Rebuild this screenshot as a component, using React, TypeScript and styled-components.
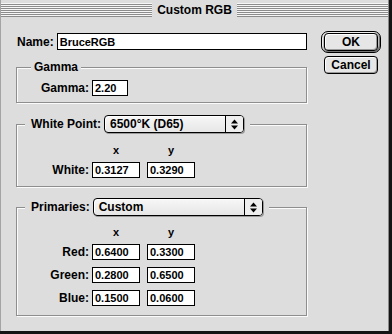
import React, { FC } from 'react';
import styled, { createGlobalStyle } from 'styled-components';

const GlobalStyle = createGlobalStyle`
  html, body {
    margin: 0;
    padding: 0;
    background: #141414;
  }
  body {
    font-family: 'Liberation Sans', Arial, sans-serif;
    color: #000;
  }
`;

const Window = styled.div`
  width: 389px;
  height: 331px;
  box-sizing: border-box;
  background: #dddddd;
  border-left: 1px solid #a4a4a4;
  border-right: 1px solid #8a8a8a;
  display: flex;
  flex-direction: column;
`;

const TitleBar = styled.div`
  height: 19px;
  display: flex;
  align-items: center;
`;

const Stripes = styled.div`
  flex: 1;
  height: 14px;
  background: repeating-linear-gradient(
    to bottom,
    #f6f6f6 0px,
    #f6f6f6 1px,
    #8c8c8c 1px,
    #8c8c8c 2px
  );
`;

const Title = styled.div`
  padding: 0 5px;
  font-size: 12px;
  font-weight: bold;
  line-height: 14px;
`;

const Body = styled.div`
  display: flex;
  align-items: flex-start;
  padding: 12px 0 0 15px;
`;

const LeftCol = styled.div`
  width: 291px;
  display: flex;
  flex-direction: column;
`;

const RightCol = styled.div`
  width: 60px;
  margin-left: 14px;
  display: flex;
  flex-direction: column;
  align-items: center;
`;

const NameRow = styled.div`
  margin-top: 2px;
  height: 17px;
  display: flex;
  align-items: center;
`;

const Label = styled.span`
  font-size: 12px;
  font-weight: bold;
  line-height: 14px;
  white-space: nowrap;
`;

const NameLabel = styled(Label)`
  padding-left: 1px;
  margin-right: 3px;
`;

const Field = styled.input<{ $w: number; $h?: number }>`
  width: ${(p) => p.$w}px;
  height: ${(p) => p.$h ?? 16}px;
  box-sizing: border-box;
  margin: 0;
  padding: 0 2px;
  border: 1px solid #000;
  background: #fff;
  font-family: 'Liberation Sans', Arial, sans-serif;
  font-size: 11px;
  font-weight: bold;
  color: #000;
  outline: none;
`;

const Group = styled.fieldset<{ $mt: number; $pt: number; $pb: number }>`
  margin: ${(p) => p.$mt}px 0 0;
  padding: ${(p) => p.$pt}px 0 ${(p) => p.$pb}px;
  min-inline-size: 0;
  border: 1px solid #8e8e8e;
  box-shadow: inset 1px 1px 0 #fbfbfb, 1px 1px 0 #fbfbfb;
`;

const Legend = styled.legend<{ $ml: number; $px: number }>`
  margin-left: ${(p) => p.$ml}px;
  padding: 0 ${(p) => p.$px}px;
  background: #dddddd;
`;

const LegendInner = styled.span`
  display: flex;
  align-items: center;
  height: 18px;
`;

const LegendText = styled(Label)`
  display: block;
`;

const Popup = styled.div<{ $w: number }>`
  width: ${(p) => p.$w}px;
  height: 18px;
  box-sizing: border-box;
  margin-left: 3px;
  display: flex;
  border: 1px solid #000;
  border-radius: 4px;
  background: linear-gradient(#f7f7f7, #e6e6e6);
  box-shadow: inset 1px 1px 0 #fff, 1px 1px 0 #9a9a9a;
  overflow: hidden;
`;

const PopupText = styled.span`
  flex: 1;
  padding-left: 5px;
  font-size: 12px;
  font-weight: bold;
  line-height: 16px;
`;

const PopupArrows = styled.span`
  width: 17px;
  display: flex;
  align-items: center;
  justify-content: center;
  border-left: 1px solid #000;
  background: #eeeeee;
`;

const Row = styled.div<{ $mt?: number }>`
  display: flex;
  align-items: center;
  margin-top: ${(p) => p.$mt ?? 0}px;
`;

const RowLabel = styled(Label)`
  width: 72px;
  margin-right: 3px;
  text-align: right;
`;

const Pair = styled.div`
  display: flex;
  gap: 7px;
`;

const Axis = styled.span`
  width: 48px;
  text-align: center;
  font-size: 11px;
  font-weight: bold;
  line-height: 14px;
`;

const DefaultRing = styled.div`
  width: 60px;
  height: 22px;
  box-sizing: border-box;
  padding: 1px 2px;
  border: 1px solid #000;
  border-radius: 7px;
  background: #bdbdbd;
  box-shadow: inset 1px 1px 0 #eee, inset -1px -1px 0 #777;
`;

const Button = styled.div`
  height: 18px;
  box-sizing: border-box;
  border: 1px solid #000;
  border-radius: 4px;
  background: #e6e6e6;
  box-shadow: inset 1px 1px 0 #fff, inset -1px -1px 0 #9a9a9a;
  font-size: 12px;
  font-weight: bold;
  line-height: 16px;
  text-align: center;
`;

const CancelButton = styled(Button)`
  width: 54px;
  margin-top: 3px;
`;

const Arrows: FC = () => (
  <svg width="7" height="11" viewBox="0 0 7 11">
    <polygon points="0,4.5 3.5,0.5 7,4.5" fill="#000" />
    <polygon points="0,6.5 3.5,10.5 7,6.5" fill="#000" />
  </svg>
);

interface PopupGroupProps {
  label: string;
  value: string;
  width: number;
}

const PopupLegend: FC<PopupGroupProps> = ({ label, value, width }) => (
  <Legend $ml={8} $px={6}>
    <LegendInner>
      <LegendText>{label}</LegendText>
      <Popup $w={width}>
        <PopupText>{value}</PopupText>
        <PopupArrows>
          <Arrows />
        </PopupArrows>
      </Popup>
    </LegendInner>
  </Legend>
);

const AxisHeader: FC = () => (
  <Row>
    <RowLabel />
    <Pair>
      <Axis>x</Axis>
      <Axis>y</Axis>
    </Pair>
  </Row>
);

interface Coord {
  name: string;
  x: string;
  y: string;
}

const primaries: Coord[] = [
  { name: 'Red:', x: '0.6400', y: '0.3300' },
  { name: 'Green:', x: '0.2800', y: '0.6500' },
  { name: 'Blue:', x: '0.1500', y: '0.0600' },
];

const CoordRow: FC<{ c: Coord; mt: number }> = ({ c, mt }) => (
  <Row $mt={mt}>
    <RowLabel>{c.name}</RowLabel>
    <Pair>
      <Field $w={48} readOnly defaultValue={c.x} />
      <Field $w={48} readOnly defaultValue={c.y} />
    </Pair>
  </Row>
);

export default function App() {
  return (
    <>
      <GlobalStyle />
      <Window>
        <TitleBar>
          <Stripes />
          <Title>Custom RGB</Title>
          <Stripes />
        </TitleBar>
        <Body>
          <LeftCol>
            <NameRow>
              <NameLabel>Name:</NameLabel>
              <Field $w={251} $h={17} readOnly defaultValue="BruceRGB" />
            </NameRow>

            <Group $mt={10} $pt={6} $pb={6}>
              <Legend $ml={14} $px={3}>
                <LegendText>Gamma</LegendText>
              </Legend>
              <Row>
                <RowLabel>Gamma:</RowLabel>
                <Field $w={36} readOnly defaultValue="2.20" />
              </Row>
            </Group>

            <Group $mt={12} $pt={10} $pb={8}>
              <PopupLegend label="White Point:" value="6500°K (D65)" width={140} />
              <AxisHeader />
              <CoordRow c={{ name: 'White:', x: '0.3127', y: '0.3290' }} mt={5} />
            </Group>

            <Group $mt={11} $pt={9} $pb={9}>
              <PopupLegend label="Primaries:" value="Custom" width={170} />
              <AxisHeader />
              {primaries.map((c, i) => (
                <CoordRow key={c.name} c={c} mt={i === 0 ? 5 : 7} />
              ))}
            </Group>
          </LeftCol>

          <RightCol>
            <DefaultRing>
              <Button>OK</Button>
            </DefaultRing>
            <CancelButton>Cancel</CancelButton>
          </RightCol>
        </Body>
      </Window>
    </>
  );
}
